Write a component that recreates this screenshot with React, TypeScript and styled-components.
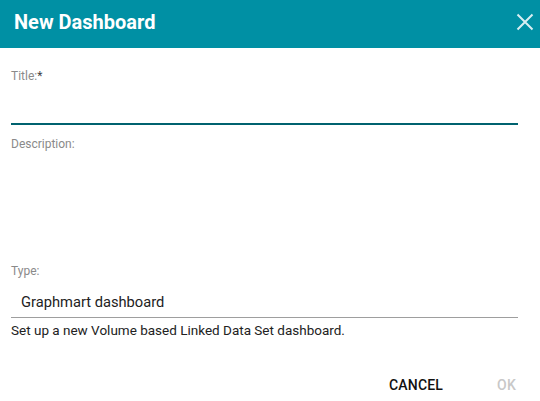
import styled, { createGlobalStyle } from 'styled-components';

const GlobalStyle = createGlobalStyle`
  html, body {
    margin: 0;
    padding: 0;
    background: #ffffff;
    font-family: Roboto, "Liberation Sans", sans-serif;
  }
`;

const Dialog = styled.div`
  width: 540px;
  height: 401px;
  display: flex;
  flex-direction: column;
  background: #fff;
`;

const Header = styled.header`
  height: 48px;
  background: #0090a4;
  display: flex;
  align-items: center;
  justify-content: space-between;
  padding: 0 6px 0 14px;
  flex-shrink: 0;
`;

const HeaderTitle = styled.h1`
  margin: 0;
  color: #fff;
  font-size: 20px;
  font-weight: 700;
  line-height: 24px;
  margin-top: -5px;
`;

const CloseButton = styled.button`
  background: transparent;
  border: none;
  padding: 0;
  width: 18px;
  height: 18px;
  display: flex;
  align-items: center;
  justify-content: center;
  cursor: pointer;
  margin-top: -5px;
`;

const Body = styled.div`
  padding: 0 22px 0 11px;
  display: flex;
  flex-direction: column;
`;

const Label = styled.label`
  display: block;
  font-size: 12px;
  color: #8a8a8a;
  line-height: 14px;
`;

const Required = styled.span`
  color: #444;
`;

const Field = styled.div<{ $top: number }>`
  padding-top: ${p => p.$top}px;
`;

const TitleInput = styled.div`
  height: 40px;
  border-bottom: 2px solid #00626f;
`;

const DescriptionArea = styled.div`
  height: 113px;
`;

const SelectBox = styled.div`
  height: 40px;
  border-bottom: 1px solid #9e9e9e;
  display: flex;
  align-items: center;
  padding: 8px 10px 0;
  font-size: 14.7px;
  color: #222;
  box-sizing: border-box;
`;

const Hint = styled.div`
  font-size: 13.5px;
  color: #222;
  margin-top: 5px;
  line-height: 15px;
`;

const Actions = styled.div`
  display: flex;
  justify-content: flex-end;
  padding: 31px 2px 0 0;
`;

const ActionButton = styled.button<{ $disabled?: boolean }>`
  background: transparent;
  border: none;
  font-family: Roboto, "Liberation Sans", sans-serif;
  font-size: 14px;
  font-weight: 500;
  letter-spacing: 0.2px;
  color: ${p => (p.$disabled ? '#c8c8c8' : '#111')};
  padding: 8px 0;
  margin-left: ${p => (p.$disabled ? '54px' : '0')};
  cursor: pointer;
`;

export default function App() {
  return (
    <>
      <GlobalStyle />
      <Dialog>
        <Header>
          <HeaderTitle>New Dashboard</HeaderTitle>
          <CloseButton aria-label="close">
            <svg width="18" height="18" viewBox="0 0 18 18">
              <path d="M1.5 1.5 L16.5 16.5 M16.5 1.5 L1.5 16.5" stroke="#d8eef2" strokeWidth="2" />
            </svg>
          </CloseButton>
        </Header>
        <Body>
          <Field $top={21}>
            <Label>Title:<Required>*</Required></Label>
            <TitleInput />
          </Field>
          <Field $top={12}>
            <Label>Description:</Label>
            <DescriptionArea />
          </Field>
          <Field $top={0}>
            <Label>Type:</Label>
            <SelectBox>Graphmart dashboard</SelectBox>
            <Hint>Set up a new Volume based Linked Data Set dashboard.</Hint>
          </Field>
          <Actions>
            <ActionButton>CANCEL</ActionButton>
            <ActionButton $disabled>OK</ActionButton>
          </Actions>
        </Body>
      </Dialog>
    </>
  );
}
